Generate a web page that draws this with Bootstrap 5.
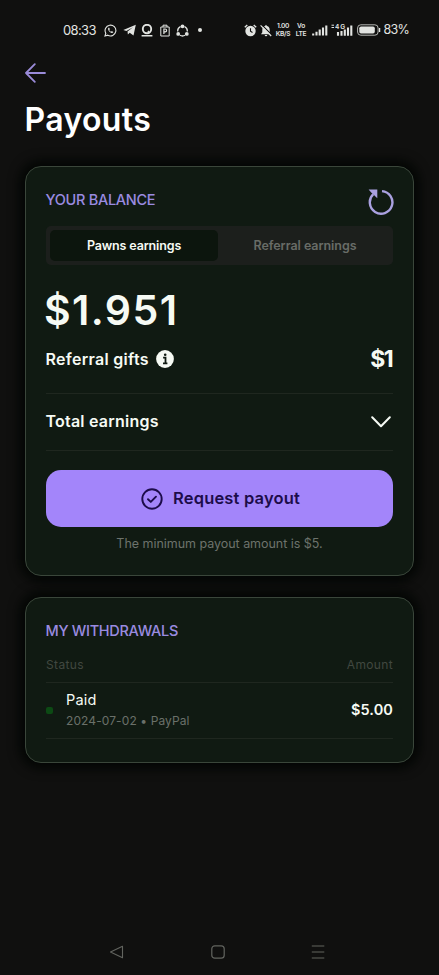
<!DOCTYPE html>
<html lang="en" data-bs-theme="dark">
<head>
<meta charset="utf-8">
<meta name="viewport" content="width=device-width, initial-scale=1">
<title>Payouts</title>
<link href="https://cdn.jsdelivr.net/npm/bootstrap@5.3.0/dist/css/bootstrap.min.css" rel="stylesheet">
<style>
body{font-family:Inter,"Liberation Sans",sans-serif;background:#10100f;color:#f6faf4;min-height:975px;white-space:nowrap;overflow:hidden}
svg{display:block;flex:none}
.status-bar{height:60px;padding:0 30px 0 63px;color:#e2e4e1}
.clock{font-size:13px;letter-spacing:-.65px;width:41px;line-height:20px}
.left-icons{gap:5.5px}
.right-icons{gap:3px}
.tiny{display:flex;flex-direction:column;align-items:center;font-size:6.6px;line-height:8px;font-weight:600;letter-spacing:-.3px}
.speed{width:17px}
.volte{width:13px}
.pct{font-size:12.5px;letter-spacing:-.75px;line-height:20px}
.back{height:26px;padding-left:25px;color:#9a8bd8}
.page-title{font-size:32px;font-weight:600;letter-spacing:.35px;line-height:40px;margin:14px 0 26px 24.5px}
.panel{margin:0 25px;border:1px solid #3a463a;border-radius:16px;background:#101a12;box-shadow:0 0 12px 5px #020503;padding:18px 20px 0}
.balance{height:410px}
.withdrawals{height:166px;margin-top:21px}
.heading{font-size:14.5px;font-weight:500;letter-spacing:-.3px;color:#9a8be0;margin:0 0 0 -.5px}
.balance .heading{line-height:29px}
.withdrawals .heading{line-height:30px}
.panel-top{height:41px}
.refresh{margin:2px -1px 0 0;color:#aaa1e0}
.switcher{height:39px;background:#1c1f1c;border-radius:5px;padding:4px}
.switcher .btn{font-size:12.5px;font-weight:600;line-height:31px;padding:0 0 0 3px;border:0;border-radius:5px;color:#686c67;letter-spacing:-.05px;flex:1}
.switcher .btn.active{background:#0c150d;color:#f6faf4;letter-spacing:-.15px;padding:0;flex:0 0 168px}
.total{font-size:41px;font-weight:600;letter-spacing:1.4px;line-height:47px;margin:22px 0 0 -2px}
.row-label{font-size:16px;font-weight:600}
.gifts{height:51px;padding-bottom:1px;letter-spacing:.3px;margin-left:-.5px}
.gift-sum{font-size:23px;font-weight:700;letter-spacing:-1.6px;margin-right:1px}
.earnings{height:54px;padding-bottom:1px;letter-spacing:.22px;padding-right:2px;margin-left:-.5px}
.rule{height:1px;background:#1f271f}
.payout-btn{height:57px;margin-top:19px;border:0;border-radius:15px;background:#a385fa;color:#1c0c4a;font-size:16.5px;font-weight:600;letter-spacing:.17px;gap:10px;padding:0 0 0 2px}
.payout-btn:hover{background:#a385fa;color:#1c0c4a}
.hint{font-size:12.5px;line-height:33px;letter-spacing:-.03px;color:#6d736c}
.cols{height:34px;margin-top:2px;font-size:12px;letter-spacing:.35px;color:#414840}
.entry{height:55px;padding-bottom:1px}
.dot{width:7px;height:7px;border-radius:2px;background:#0c4a14;margin-right:13px}
.paid{font-size:14.5px;letter-spacing:.2px;line-height:21px}
.when{font-size:12px;letter-spacing:.1px;line-height:21px;color:#6a7069}
.sum{font-size:14.5px;font-weight:600;letter-spacing:.1px}
.nav-keys{margin-top:180px;height:18px;padding-left:109px;color:#62645f}
</style>
</head>
<body class="d-flex flex-column">
<header class="status-bar d-flex align-items-center">
  <span class="clock">08:33</span>
  <div class="left-icons d-flex align-items-center">
    <svg width="13" height="13" viewBox="0 0 13 13" fill="none" stroke="currentColor" stroke-width="1.1"><path d="M1 12l.8-2.8a5.4 5.4 0 1 1 2 2z"/><path d="M4.5 3.7c-.9.8-.3 2.4.8 3.7 1.3 1.3 2.9 2 3.8 1.2l.2-.7-1.5-.8-.7.7c-.9-.4-1.5-1-1.9-1.9l.7-.7-.7-1.5z" fill="currentColor" stroke="none"/></svg>
    <svg width="13" height="12" viewBox="0 0 13 12"><path fill="currentColor" d="M.3 6 12.8.8 10.5 11.4 6.7 8.7 4.9 10.6 4.5 7.5 10 3.2 3.4 7z"/></svg>
    <svg width="12" height="13" viewBox="0 0 12 13" fill="none" stroke="currentColor"><circle cx="6" cy="5" r="4.2" stroke-width="1.9"/><path d="M7 7 8.500 9M.6 11.8h10.800" stroke-width="1.6"/></svg>
    <svg width="12" height="13" viewBox="0 0 12 13" fill="none" stroke="currentColor"><path d="M1.8 3h8.400v9H1.800zM4 3V1.200h4V3"/><path d="M4.900 10V5h1.300a1.300 1.300 0 0 1 0 2.800H4.900" stroke-width="1.2"/></svg>
    <svg width="13" height="13" viewBox="0 0 13 13" fill="none" stroke="currentColor" stroke-width="1.3"><path d="M4.400 2.600A5 5 0 0 0 1.700 7.500M8.600 2.600a5 5 0 0 1 2.700 4.900M4 11.300a5 5 0 0 0 5 0"/><g fill="currentColor" stroke="none"><circle cx="6.500" cy="2.300" r="1.900"/><circle cx="2.200" cy="9.900" r="1.900"/><circle cx="10.800" cy="9.900" r="1.900"/></g></svg>
    <svg width="14" height="6" viewBox="0 0 14 6"><circle cx="5" cy="3" r="2" fill="currentColor"/></svg>
  </div>
  <div class="right-icons ms-auto d-flex align-items-center">
    <svg width="13" height="13" viewBox="0 0 13 13"><path d="M.8 3.300 3.300 1M12.200 3.300 9.700 1" stroke="currentColor" stroke-width="1.4"/><circle cx="6.500" cy="7" r="5.200" fill="currentColor"/><path d="M6.500 4.300V7.300L8.500 8.500" fill="none" stroke="#10100f" stroke-width="1.1"/></svg>
    <svg width="12" height="13" viewBox="0 0 12 13"><path fill="currentColor" d="M6 .8 7 1.900c2 .5 2.700 2 2.700 4v2.300L11 10.300H1L2.300 8.200V5.900c0-2 .8-3.500 2.700-4zM4.700 11h2.600a1.300 1.300 0 0 1-2.600 0z"/><path d="M1.800 .9 12 11.200" stroke="#10100f" stroke-width="1.2"/><path d="M.6 1.300 11.200 12" stroke="currentColor" stroke-width="1.2"/></svg>
    <span class="tiny speed"><span>1.00</span><span>KB/S</span></span>
    <span class="tiny volte"><span>Vo</span><span>LTE</span></span>
    <svg width="16" height="12" viewBox="0 0 16 12" style="margin-left:1px"><path d="M1.200 11.500V9.500M4.500 11.500V7.700M7.700 11.500V5.500M11 11.500V3.500M14.300 11.500V1.500" stroke="currentColor" stroke-width="2.100"/></svg>
    <svg width="22" height="14" viewBox="0 0 22 14"><path d="M7 12.800V9M10.500 12.800V8M13.800 12.800V6.500M17 12.800V4.500M20.300 12.800V2.500" stroke="currentColor" stroke-width="2.100"/><path d="M.5 2.200h2.500M.5 4.500h2.500" stroke="currentColor"/><text x="4" y="5.700" font-size="6.500" font-weight="600" fill="currentColor" textLength="10">4G</text></svg>
    <svg width="24" height="12" viewBox="0 0 24 12" style="margin-left:1px"><rect x=".6" y=".8" width="20.500" height="10.400" rx="3.200" fill="none" stroke="#b5b7b4"/><rect x="2.300" y="2.400" width="15.500" height="7.200" rx="1.800" fill="currentColor"/><path d="M22.600 4v4" stroke="currentColor" stroke-width="1.3"/></svg>
    <span class="pct">83%</span>
  </div>
</header>

<a class="back d-flex align-items-center" href="#" aria-label="Back">
  <svg width="21" height="20" viewBox="0 0 21 20" fill="none" stroke="currentColor" stroke-width="1.8" stroke-linecap="round" stroke-linejoin="round"><path d="M20 10H1M9.800 1.200 1 10l8.800 8.800"/></svg>
</a>
<h1 class="page-title">Payouts</h1>

<main>
  <section class="panel balance">
    <div class="panel-top d-flex justify-content-between align-items-start">
      <h2 class="heading">YOUR BALANCE</h2>
      <svg class="refresh" width="26" height="28" viewBox="0 0 26 28"><path d="M14 4.100A11.300 11.300 0 1 1 5.300 7.200" fill="none" stroke="currentColor" stroke-width="2.400"/><path d="M.6 2.500H9.300V11.300L6.700 8.800 3.200 5.500z" fill="currentColor"/></svg>
    </div>
    <div class="switcher d-flex">
      <button class="btn active" type="button">Pawns earnings</button>
      <button class="btn" type="button">Referral earnings</button>
    </div>
    <div class="total">$1.951</div>
    <div class="gifts row-label d-flex align-items-center">
      <span>Referral gifts</span>
      <svg width="18" height="18" viewBox="0 0 18 18" style="margin-left:7px"><circle cx="9" cy="9" r="8.900" fill="currentColor"/><path d="M7.100 7.700H9.500V13.300M7 13.300h4.400" fill="none" stroke="#101a12" stroke-width="1.8"/><circle cx="9.200" cy="4.700" r="1.300" fill="#101a12"/></svg>
      <span class="gift-sum ms-auto">$1</span>
    </div>
    <div class="rule mt-2"></div>
    <div class="earnings row-label d-flex align-items-center justify-content-between">
      <span>Total earnings</span>
      <svg width="20" height="12" viewBox="0 0 20 12" fill="none" stroke="currentColor" stroke-width="2" stroke-linecap="round" stroke-linejoin="round" style="margin-top:2px"><path d="M1.200 1.200 10 10.300l8.800-9.100"/></svg>
    </div>
    <div class="rule" style="margin-top:2px"></div>
    <button class="payout-btn btn w-100 d-flex align-items-center justify-content-center" type="button">
      <svg width="22" height="22" viewBox="0 0 22 22" fill="none" stroke="currentColor" stroke-width="1.9" stroke-linecap="round" stroke-linejoin="round"><circle cx="11" cy="11" r="9.700"/><path d="m7 11.200 2.800 2.700 5.200-5.200"/></svg>
      <span>Request payout</span>
    </button>
    <div class="hint text-center">The minimum payout amount is $5.</div>
  </section>

  <section class="panel withdrawals">
    <h2 class="heading">MY WITHDRAWALS</h2>
    <div class="cols d-flex align-items-center justify-content-between"><span>Status</span><span>Amount</span></div>
    <div class="rule"></div>
    <div class="entry d-flex align-items-center">
      <span class="dot"></span>
      <div>
        <div class="paid">Paid</div>
        <div class="when">2024-07-02 • PayPal</div>
      </div>
      <span class="sum ms-auto">$5.00</span>
    </div>
    <div class="rule"></div>
  </section>
</main>

<footer class="nav-keys d-flex align-items-center">
  <svg width="15" height="14" viewBox="0 0 15 14" fill="none" stroke="currentColor" stroke-width="1.1" stroke-linejoin="round"><path d="M13.500 1.200v11.600L1.500 7z"/></svg>
  <svg width="14" height="14" viewBox="0 0 14 14" fill="none" stroke="currentColor" stroke-width="1.2" style="margin-left:87px"><rect x=".8" y=".8" width="12.400" height="12.400" rx="3"/></svg>
  <svg width="14" height="14" viewBox="0 0 14 14" stroke="currentColor" stroke-width="1.2" style="margin-left:86px"><path d="M.8 1h12.500M.8 7h12.500M.8 13h12.500"/></svg>
</footer>
<script src="https://cdn.jsdelivr.net/npm/bootstrap@5.3.0/dist/js/bootstrap.bundle.min.js"></script>
</body>
</html>
